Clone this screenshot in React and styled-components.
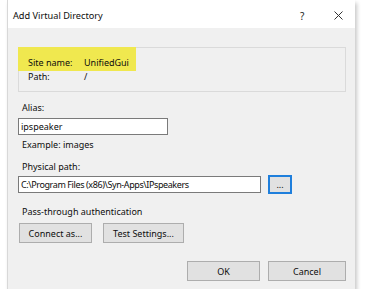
import React from "react";
import styled, { createGlobalStyle } from "styled-components";

const Global = createGlobalStyle`
  html, body { margin: 0; padding: 0; background: #ffffff; }
  body { font-family: "Noto Sans", "Open Sans", sans-serif; font-size: 9px; color: #0d0d0d; }
  * { box-sizing: border-box; }
`;

const Dialog = styled.div`
  margin-left: 7px;
  width: 348px;
  height: 289px;
  background: #f0f0f0;
  border-left: 1px solid #d8d8d8;
  box-shadow: 2px 3px 4px rgba(0, 0, 0, 0.22);
  display: flex;
  flex-direction: column;
`;

const TitleBar = styled.div`
  height: 28px;
  background: #ffffff;
  display: flex;
  align-items: center;
  padding: 3px 0 0 5px;
`;

const Title = styled.span`
  flex: 1;
  font-size: 9.2px;
`;

const Help = styled.span`
  width: 10px;
  margin-right: 24px;
  font-size: 10px;
  color: #222;
`;

const Close = styled.svg`
  width: 9px;
  height: 9px;
  margin-right: 12px;
`;

const Body = styled.div`
  flex: 1;
  display: flex;
  flex-direction: column;
  padding: 19px 9px 8px 10px;
`;

const Group = styled.div`
  border: 1px solid #dadada;
  padding-bottom: 7px;
`;

const Highlight = styled.div`
  width: 118px;
  margin: -1px 0 0 -1px;
  padding: 9px 0 1px 10px;
  background: #f0e84f;
`;

const InfoRow = styled.div`
  display: grid;
  grid-template-columns: 56px auto;
  line-height: 14px;
  padding-left: ${(p) => p.$indent || 0}px;
  margin-top: ${(p) => p.$mt || 0}px;
`;

const Label = styled.div`
  line-height: 14px;
  padding-left: 4px;
  margin-top: ${(p) => p.$mt || 0}px;
`;

const TextInput = styled.div`
  width: ${(p) => p.$w}px;
  height: 17px;
  background: #fff;
  border: 1px solid #7a7a7a;
  line-height: 15px;
  padding-left: 2px;
  margin-top: ${(p) => p.$mt || 0}px;
  letter-spacing: ${(p) => (p.$tight ? "-0.4px" : "normal")};
  white-space: nowrap;
  overflow: hidden;
`;

const Row = styled.div`
  display: flex;
  align-items: center;
  gap: ${(p) => p.$gap || 0}px;
  margin-top: ${(p) => p.$mt || 0}px;
  justify-content: ${(p) => (p.$end ? "flex-end" : "flex-start")};
  padding-left: ${(p) => p.$pl || 0}px;
`;

const Button = styled.div`
  width: ${(p) => p.$w}px;
  height: 20px;
  background: #e1e1e1;
  border: 1px solid #adadad;
  display: flex;
  align-items: center;
  justify-content: center;
`;

const BrowseButton = styled(Button)`
  height: 19px;
  border: 2px solid #1f7fdc;
  align-items: flex-end;
  padding-bottom: 3px;
  line-height: 8px;
`;

const Spacer = styled.div`
  flex: 1;
`;

export default function App() {
  return (
    <>
      <Global />
      <Dialog>
        <TitleBar>
          <Title>Add Virtual Directory</Title>
          <Help>?</Help>
          <Close viewBox="0 0 9 9">
            <path d="M0.5 0.5 L8.5 8.5 M8.5 0.5 L0.5 8.5" stroke="#333" strokeWidth="1" fill="none" />
          </Close>
        </TitleBar>
        <Body>
          <Group>
            <Highlight>
              <InfoRow>
                <span>Site name:</span>
                <span>UnifiedGui</span>
              </InfoRow>
            </Highlight>
            <InfoRow $indent={9} $mt={-1}>
              <span>Path:</span>
              <span>/</span>
            </InfoRow>
          </Group>
          <Label $mt={9}>Alias:</Label>
          <TextInput $w={150} $mt={3}>ipspeaker</TextInput>
          <Label $mt={3}>Example: images</Label>
          <Label $mt={8}>Physical path:</Label>
          <Row $gap={7} $mt={1}>
            <TextInput $w={243} $tight>C:\Program Files (x86)\Syn-Apps\IPspeakers</TextInput>
            <BrowseButton $w={24}>...</BrowseButton>
          </Row>
          <Label $mt={11}>Pass-through authentication</Label>
          <Row $gap={11} $mt={4} $pl={1}>
            <Button $w={73}>Connect as...</Button>
            <Button $w={81}>Test Settings...</Button>
          </Row>
          <Spacer />
          <Row $gap={8} $end>
            <Button $w={73}>OK</Button>
            <Button $w={78}>Cancel</Button>
          </Row>
        </Body>
      </Dialog>
    </>
  );
}
